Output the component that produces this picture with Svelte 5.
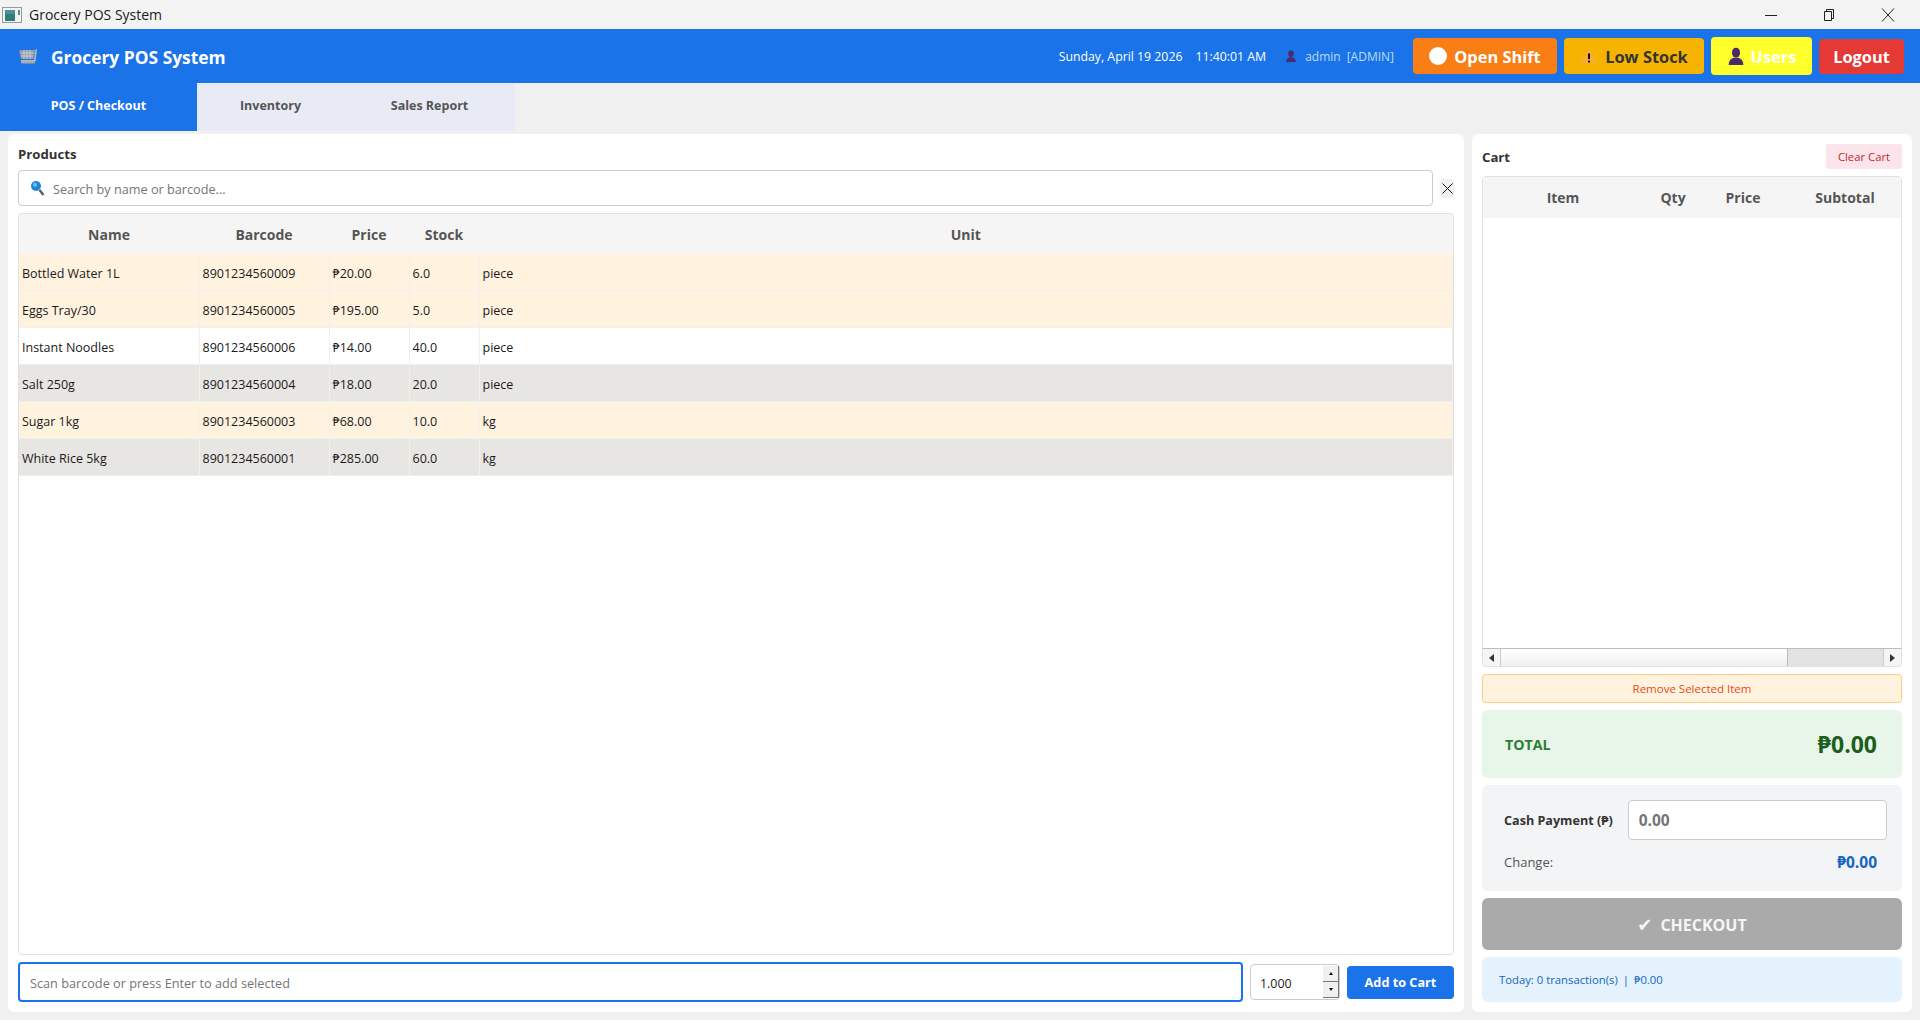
<script>
  // low = under reorder level, alt = striped row
  const products = [
    { name: 'Bottled Water 1L', barcode: '8901234560009', price: '₱20.00', stock: '6.0', unit: 'piece', tone: 'low' },
    { name: 'Eggs Tray/30', barcode: '8901234560005', price: '₱195.00', stock: '5.0', unit: 'piece', tone: 'low' },
    { name: 'Instant Noodles', barcode: '8901234560006', price: '₱14.00', stock: '40.0', unit: 'piece', tone: '' },
    { name: 'Salt 250g', barcode: '8901234560004', price: '₱18.00', stock: '20.0', unit: 'piece', tone: 'alt' },
    { name: 'Sugar 1kg', barcode: '8901234560003', price: '₱68.00', stock: '10.0', unit: 'kg', tone: 'low' },
    { name: 'White Rice 5kg', barcode: '8901234560001', price: '₱285.00', stock: '60.0', unit: 'kg', tone: 'alt' },
  ];
</script>

{#snippet person(size)}
  <svg class="person" width={size} height={size} viewBox="0 0 16 16" aria-hidden="true">
    <ellipse cx="8" cy="5" rx="3.6" ry="4.4" fill="#4b2a6b" />
    <path d="M1.5 16c0-4 2.6-6 4.6-6.4h3.8c2 .4 4.6 2.4 4.6 6.4z" fill="#4b2a6b" />
  </svg>
{/snippet}

<div class="app">
  <div class="titlebar">
    <svg class="app-icon" width="20" height="16" viewBox="0 0 20 16" aria-hidden="true">
      <rect x=".5" y=".5" width="19" height="15" fill="#f4f4f4" stroke="#9a9a9a" />
      <rect x="3" y="3" width="10" height="11" fill="#2f7f78" />
      <rect x="3" y="3" width="10" height="4" fill="#4d8f9c" />
      <rect x="16" y="3" width="2" height="5" fill="#3f9a8a" />
    </svg>
    <span class="window-title">Grocery POS System</span>
    <div class="window-controls">
      <svg width="14" height="14" viewBox="0 0 14 14" aria-hidden="true"><path d="M1 7.5h12" stroke="#222" fill="none" /></svg>
      <svg width="14" height="14" viewBox="0 0 14 14" aria-hidden="true"><path d="M3.5 3.5h7v9h-7zM5.5 3.5v-2h7v9h-2" stroke="#222" fill="none" /></svg>
      <svg width="14" height="14" viewBox="0 0 14 14" aria-hidden="true"><path d="M1 .5l12 13M13 .5l-12 13" stroke="#222" fill="none" /></svg>
    </div>
  </div>

  <header class="header">
    <svg class="cart-icon" width="20" height="16" viewBox="0 0 20 16" aria-hidden="true">
      <path d="M1 2h16l-1.5 9H3z" fill="#8d9aa8" />
      <path d="M3 5h13M3 8h12M6 2v9M9 2v9M12 2v9" stroke="#c9d0d6" fill="none" />
      <path d="M17.500 1l1.500 .5-1.500 12H3v-1.600h13z" fill="#b6b8ba" />
      <rect x="3" y="13" width="14" height="2.500" rx="1" fill="#a9adb1" />
    </svg>
    <span class="brand">Grocery POS System</span>
    <span class="clock">Sunday, April 19 2026</span>
    <span class="clock time">11:40:01 AM</span>
    <span class="account">
      {@render person(12)}
      <span class="account-name">admin</span>
      <span class="account-role">[ADMIN]</span>
    </span>
    <button class="hbtn shift">
      <span class="dot"></span>Open Shift
    </button>
    <button class="hbtn stock">
      <svg width="18" height="16" viewBox="0 0 18 16" aria-hidden="true">
        <path d="M9 1l8.500 14H.5z" fill="#fbab3c" />
        <path d="M9 5.500v5.500M9 12.500v2" stroke="#111" stroke-width="2" fill="none" />
      </svg>
      Low Stock
    </button>
    <button class="hbtn users">
      {@render person(18)}
      Users
    </button>
    <button class="hbtn logout">Logout</button>
  </header>

  <nav class="tabs">
    <button class="tab active">POS / Checkout</button>
    <button class="tab">Inventory</button>
    <button class="tab">Sales Report</button>
  </nav>

  <main class="main">
    <section class="panel products">
      <h2 class="panel-title">Products</h2>
      <div class="search-row">
        <div class="search">
          <svg width="15" height="16" viewBox="0 0 15 16" aria-hidden="true">
            <circle cx="6" cy="6" r="5" fill="#1e88d8" />
            <circle cx="5" cy="4.800" r="2" fill="#6fc1f2" />
            <path d="M9.500 10l4 5" stroke="#55626e" stroke-width="2.500" fill="none" />
          </svg>
          <span class="placeholder">Search by name or barcode...</span>
        </div>
        <button class="clear-search">
          <svg width="11" height="11" viewBox="0 0 11 11" aria-hidden="true"><path d="M.5.500l10 10M10.500.5l-10 10" stroke="#111" fill="none" /></svg>
        </button>
      </div>

      <div class="table-wrap">
        <table class="grid">
          <colgroup>
            <col style="width: 180px" /><col style="width: 130px" /><col style="width: 80px" /><col style="width: 70px" /><col />
          </colgroup>
          <thead>
            <tr><th>Name</th><th>Barcode</th><th>Price</th><th>Stock</th><th>Unit</th></tr>
          </thead>
          <tbody>
            {#each products as p}
              <tr class={p.tone}>
                <td>{p.name}</td>
                <td>{p.barcode}</td>
                <td>{p.price}</td>
                <td>{p.stock}</td>
                <td>{p.unit}</td>
              </tr>
            {/each}
          </tbody>
        </table>
      </div>

      <div class="scan-row">
        <div class="scan"><span class="placeholder">Scan barcode or press Enter to add selected</span></div>
        <div class="spin">
          <span class="qty">1.000</span>
          <div class="spin-btns">
            <span class="spin-btn"><i class="up"></i></span>
            <span class="spin-btn"><i class="down"></i></span>
          </div>
        </div>
        <button class="add">Add to Cart</button>
      </div>
    </section>

    <aside class="panel cart">
      <div class="cart-head">
        <h2 class="panel-title">Cart</h2>
        <button class="clear-cart">Clear Cart</button>
      </div>

      <div class="cart-table">
        <div class="cart-cols">
          <span class="c-item">Item</span>
          <span class="c-qty">Qty</span>
          <span class="c-price">Price</span>
          <span class="c-sub">Subtotal</span>
        </div>
        <div class="cart-body"></div>
        <div class="hscroll">
          <span class="arrow"><i class="left"></i></span>
          <span class="track"></span>
          <span class="thumb"></span>
          <span class="arrow end"><i class="right"></i></span>
        </div>
      </div>

      <button class="remove">Remove Selected Item</button>

      <div class="total">
        <span class="total-label">TOTAL</span>
        <span class="total-value">₱0.00</span>
      </div>

      <div class="payment">
        <div class="pay-row">
          <span class="pay-label">Cash Payment (₱)</span>
          <div class="pay-input">0.00</div>
        </div>
        <div class="change-row">
          <span class="change-label">Change:</span>
          <span class="change-value">₱0.00</span>
        </div>
      </div>

      <button class="checkout"><span class="tick">✔</span>CHECKOUT</button>

      <div class="today"><span>Today: 0 transaction(s)</span><span class="sep">|</span><span>₱0.00</span></div>
    </aside>
  </main>
</div>

<style>
  :global(body) {
    margin: 0;
    background: #f0f0f0;
    font-family: "Open Sans", "Noto Sans", "DejaVu Sans", sans-serif;
  }

  .app {
    display: flex;
    flex-direction: column;
    height: 1020px;
    overflow: hidden;
  }

  button {
    font-family: inherit;
    border: 0;
    padding: 0;
    cursor: pointer;
  }

  /* window chrome */
  .titlebar {
    display: flex;
    align-items: center;
    height: 29px;
    flex: none;
    padding-left: 2px;
    background: #f3f3f3;
  }

  .window-title {
    margin-left: 7px;
    font-size: 14px;
    color: #1a1a1a;
  }

  .window-controls {
    display: flex;
    gap: 43px;
    margin-left: auto;
    margin-right: 25px;
  }

  .window-controls svg:last-child {
    margin-left: 3px;
  }

  /* header */
  .header {
    display: flex;
    align-items: center;
    flex: none;
    height: 54px;
    padding: 0 16px 0 18px;
    background: #1a73e8;
    color: #fff;
  }

  .brand {
    margin-left: 13px;
    margin-right: auto;
    padding-top: 2px;
    font-size: 17.4px;
    font-weight: 700;
  }

  .clock {
    font-size: 12.3px;
    color: #fff;
  }

  .time {
    margin-left: 13px;
  }

  .account {
    display: flex;
    align-items: center;
    margin-left: 19px;
    margin-right: 19px;
    font-size: 12px;
    color: #bbdefb;
  }

  .account-name {
    margin-left: 8px;
  }

  .account-role {
    margin-left: 6px;
  }

  .hbtn {
    display: flex;
    align-items: center;
    justify-content: center;
    gap: 7px;
    height: 36px;
    margin-right: 7px;
    border-radius: 4px;
    font-size: 16.4px;
    font-weight: 700;
    color: #fff;
  }

  .shift {
    width: 144px;
    background: #f97e16;
  }

  .dot {
    width: 18px;
    height: 18px;
    border-radius: 50%;
    background: #fff;
  }

  .stock {
    width: 140px;
    background: #f6b400;
    color: #333;
  }

  .users {
    width: 101px;
    height: 38px;
    gap: 6px;
    background: #ffff2b;
  }

  .logout {
    width: 85px;
    height: 35px;
    margin-right: 0;
    background: #e53935;
  }

  /* tabs */
  .tabs {
    display: grid;
    grid-template-columns: 197px 147px 171px;
    flex: none;
    height: 48px;
  }

  .tab {
    padding-bottom: 4px;
    background: #e8eaf6;
    color: #555;
    font-size: 12.5px;
    font-weight: 700;
  }

  .tab.active {
    background: #1a73e8;
    color: #fff;
  }

  /* content */
  .main {
    display: flex;
    flex: 1;
    min-height: 0;
    gap: 8px;
    padding: 3px 8px 8px;
  }

  .panel {
    display: flex;
    flex-direction: column;
    gap: 7px;
    box-sizing: border-box;
    padding: 10px;
    background: #fff;
    border-radius: 6px;
  }

  .products {
    flex: 1;
    min-width: 0;
  }

  .cart {
    flex: none;
    width: 440px;
  }

  .panel-title {
    margin: 0;
    height: 19px;
    padding-top: 1px;
    line-height: 19px;
    font-size: 13.2px;
    font-weight: 700;
    color: #333;
    box-sizing: border-box;
  }

  .search-row {
    display: flex;
    align-items: center;
    gap: 7px;
    flex: none;
  }

  .search {
    display: flex;
    align-items: center;
    gap: 8px;
    flex: 1;
    box-sizing: border-box;
    height: 36px;
    padding-left: 11px;
    border: 1px solid #ccc;
    border-radius: 4px;
  }

  .placeholder {
    padding-top: 2px;
    font-size: 12.7px;
    color: #757575;
  }

  .clear-search {
    display: flex;
    align-items: center;
    justify-content: center;
    width: 14px;
    height: 19px;
    border-radius: 3px;
    background: #f0f0f0;
  }

  .table-wrap {
    flex: 1;
    min-height: 0;
    border: 1px solid #e0e0e0;
    border-radius: 4px;
    overflow: hidden;
  }

  .grid {
    width: 100%;
    table-layout: fixed;
    border-collapse: collapse;
    font-size: 12.5px;
    color: #1a1a1a;
  }

  .grid th {
    height: 40px;
    padding: 0;
    background: #f5f5f5;
    font-size: 14px;
    font-weight: 700;
    color: #555;
  }

  .grid td {
    height: 34px;
    padding: 2px 3px 0;
    border-right: 1px solid #f0f0f0;
    border-bottom: 1px solid #f0f0f0;
  }

  .grid tr.low td {
    background: #fff3e0;
  }

  .grid tr.alt td {
    background: #e8e6e3;
  }

  .scan-row {
    display: flex;
    align-items: center;
    flex: none;
    height: 40px;
  }

  .scan {
    display: flex;
    align-items: center;
    flex: 1;
    box-sizing: border-box;
    height: 40px;
    padding-left: 10px;
    border: 2px solid #1a73e8;
    border-radius: 4px;
  }

  .spin {
    display: flex;
    align-items: center;
    justify-content: space-between;
    box-sizing: border-box;
    width: 90px;
    height: 36px;
    margin-left: 7px;
    padding-left: 9px;
    border: 1px solid #ccc;
    border-radius: 4px;
    font-size: 12.4px;
    color: #222;
  }

  .qty {
    padding-top: 2px;
  }

  .spin-btns {
    display: flex;
    flex-direction: column;
    width: 16px;
  }

  .spin-btn {
    display: flex;
    align-items: center;
    justify-content: center;
    height: 16px;
    background: #f0f0f0;
    border-bottom: 1px solid #777;
    border-right: 1px solid #777;
    box-sizing: border-box;
  }

  .spin-btn i {
    border-left: 2px solid transparent;
    border-right: 2px solid transparent;
  }

  .spin-btn .up {
    border-bottom: 3px solid #111;
  }

  .spin-btn .down {
    border-top: 3px solid #111;
  }

  .add {
    width: 107px;
    height: 33px;
    margin-left: 7px;
    border-radius: 4px;
    background: #1a73e8;
    color: #fff;
    font-size: 12.7px;
    font-weight: 700;
  }

  /* cart */
  .cart-head {
    display: flex;
    align-items: center;
    justify-content: space-between;
    flex: none;
    height: 25px;
  }

  .clear-cart {
    width: 76px;
    height: 25px;
    border-radius: 3px;
    background: #fce4ec;
    color: #c62828;
    font-size: 11.3px;
  }

  .cart-table {
    display: flex;
    flex-direction: column;
    flex: 1;
    min-height: 0;
    border: 1px solid #e0e0e0;
    border-radius: 4px;
    overflow: hidden;
  }

  .cart-cols {
    display: grid;
    grid-template-columns: 160px 60px 80px 124px;
    flex: none;
    height: 41px;
    align-items: center;
    background: #f5f5f5;
    font-size: 14px;
    font-weight: 700;
    color: #555;
    text-align: center;
  }

  .cart-body {
    flex: 1;
  }

  .hscroll {
    display: flex;
    flex: none;
    height: 17px;
    border-top: 1px solid #bdbdbd;
  }

  .arrow {
    display: flex;
    align-items: center;
    justify-content: center;
    width: 17px;
    border-right: 1px solid #ccc;
    background: #f5f5f5;
  }

  .arrow.end {
    border-right: 0;
    border-left: 1px solid #ccc;
  }

  .arrow i {
    border-top: 4px solid transparent;
    border-bottom: 4px solid transparent;
  }

  .arrow .left {
    border-right: 5px solid #333;
  }

  .arrow .right {
    border-left: 5px solid #333;
  }

  .track {
    flex: 1;
    background: linear-gradient(#fff, #f0f0f0);
  }

  .thumb {
    width: 95px;
    border-left: 1px solid #bbb;
    background: #e3e3e3;
  }

  .remove {
    flex: none;
    height: 29px;
    box-sizing: border-box;
    border: 1px solid #ffcc80;
    border-radius: 4px;
    background: #fff3e0;
    color: #e64a19;
    font-size: 11.5px;
  }

  .total {
    display: flex;
    align-items: center;
    justify-content: space-between;
    flex: none;
    height: 68px;
    box-sizing: border-box;
    padding: 0 25px 0 23px;
    border-radius: 6px;
    background: #e8f5e9;
  }

  .total-label {
    font-size: 14.2px;
    font-weight: 700;
    color: #2e7d32;
  }

  .total-value {
    font-size: 23px;
    font-weight: 700;
    color: #1b5e20;
  }

  .payment {
    flex: none;
    height: 106px;
    box-sizing: border-box;
    padding: 15px 25px 0 22px;
    border-radius: 6px;
    background: #f3f4f6;
  }

  .pay-row {
    display: flex;
    align-items: center;
    gap: 15px;
    margin-right: -10px;
  }

  .pay-label {
    padding-top: 1px;
    font-size: 12.6px;
    font-weight: 700;
    color: #333;
  }

  .pay-input {
    display: flex;
    align-items: center;
    flex: 1;
    box-sizing: border-box;
    height: 40px;
    padding-left: 10px;
    border: 1px solid #ccc;
    border-radius: 4px;
    background: #fff;
    font-size: 15.5px;
    font-weight: 700;
    color: #757575;
  }

  .change-row {
    display: flex;
    align-items: center;
    justify-content: space-between;
    margin-top: 11px;
  }

  .change-label {
    font-size: 13px;
    color: #555;
  }

  .change-value {
    font-size: 15.5px;
    font-weight: 700;
    color: #1565c0;
  }

  .checkout {
    flex: none;
    height: 52px;
    padding-top: 2px;
    border-radius: 6px;
    background: #aaa;
    color: #f5f5f5;
    font-size: 16px;
    font-weight: 700;
  }

  .tick {
    margin-right: 8px;
    font-family: "DejaVu Sans", sans-serif;
    font-size: 18px;
  }

  .today {
    display: flex;
    align-items: center;
    flex: none;
    height: 45px;
    padding-left: 17px;
    border-radius: 6px;
    background: #e3f2fd;
    font-size: 11.3px;
    color: #1565c0;
  }

  .sep {
    margin: 0 5px;
  }
</style>
